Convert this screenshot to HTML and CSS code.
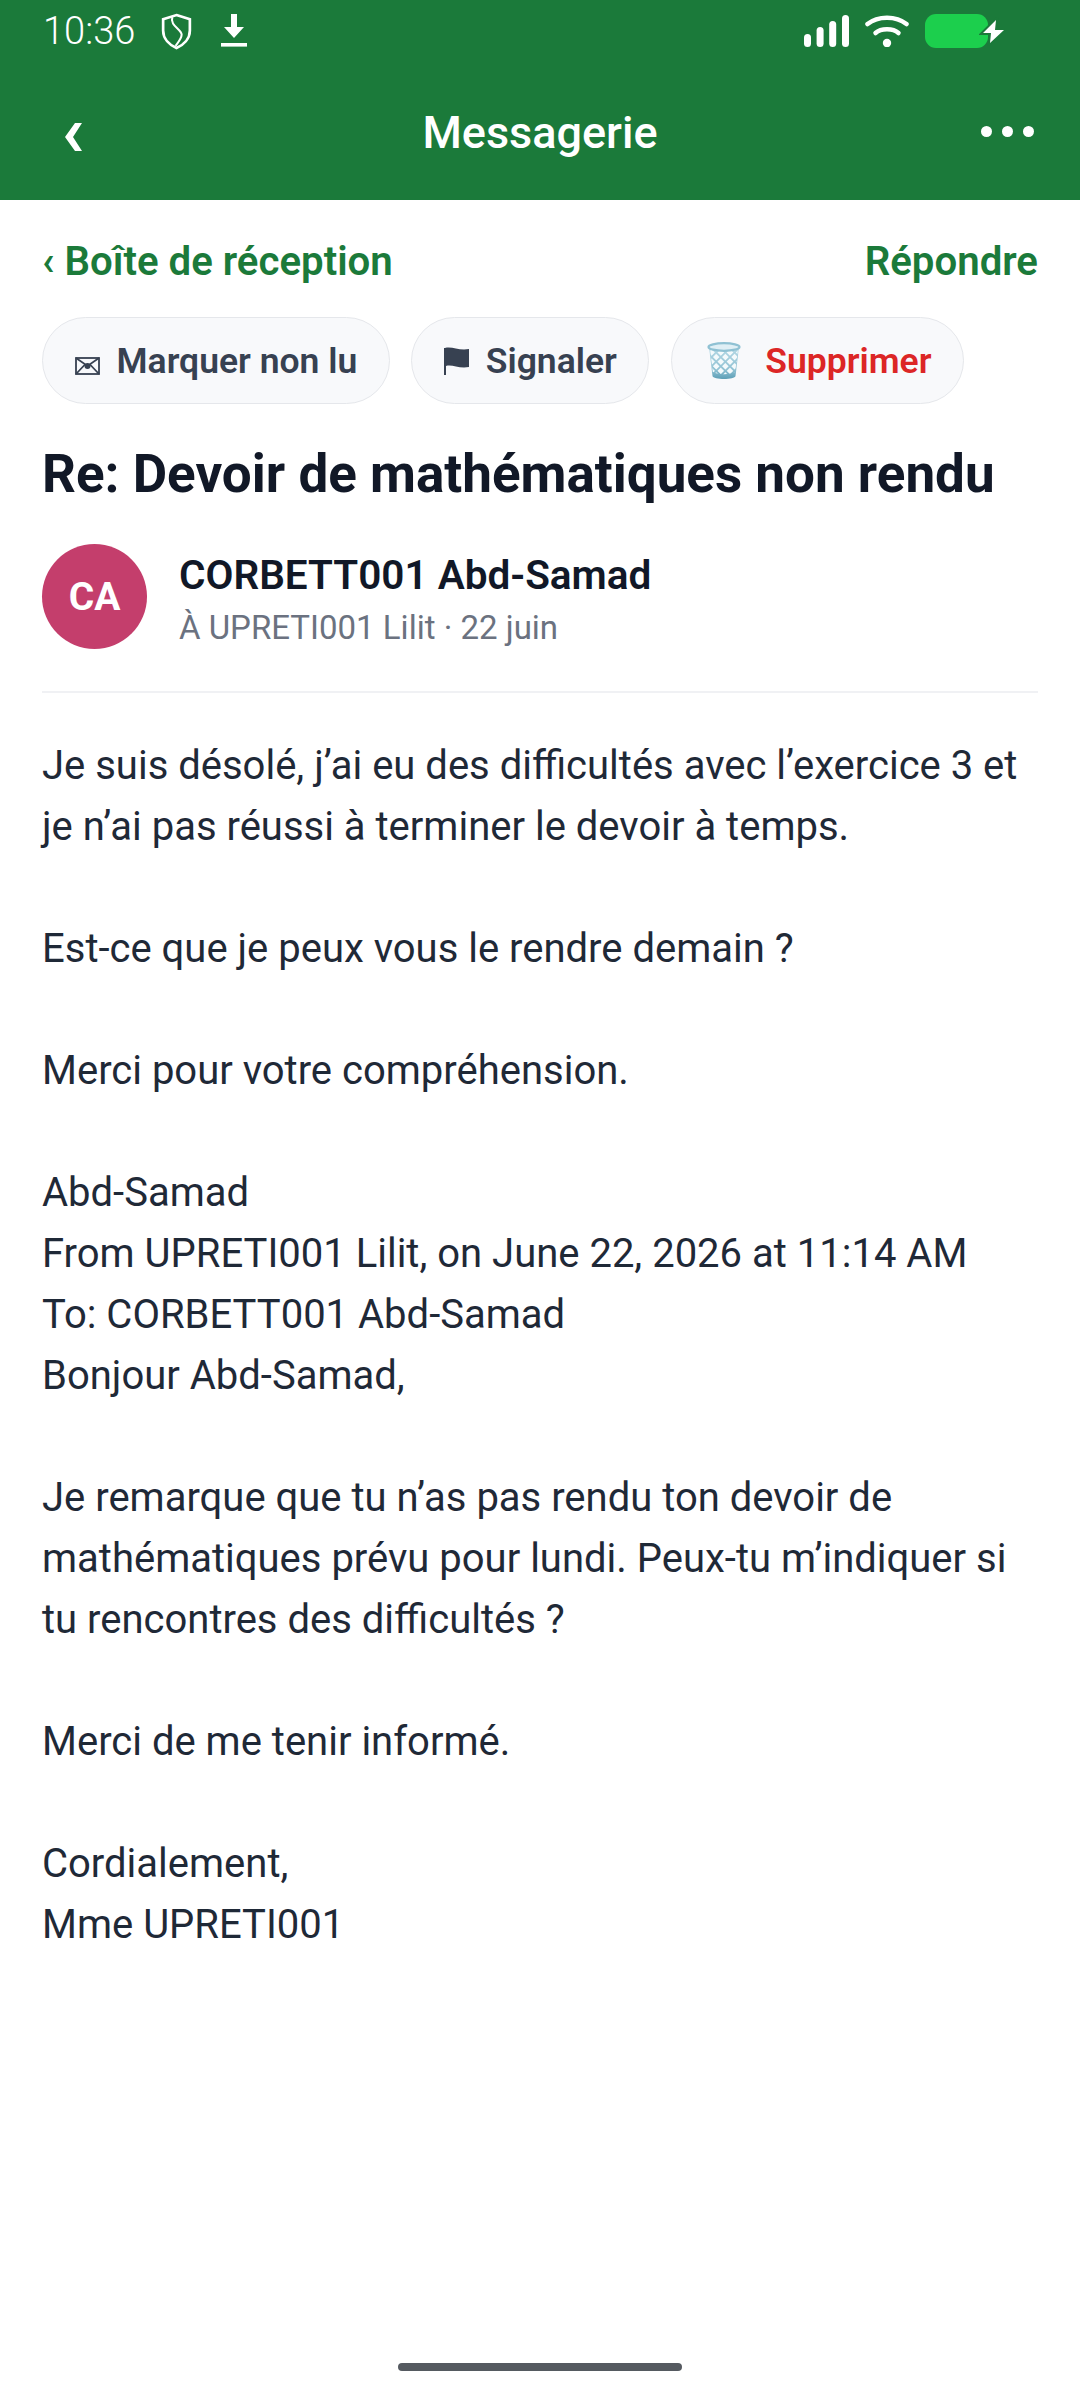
FILE: index.html
```html
<!DOCTYPE html>
<html lang="fr">
<head>
    <meta charset="UTF-8">
    <meta name="viewport" content="width=device-width, initial-scale=1.0">
    <title>Messagerie</title>
    <link rel="stylesheet" href="styles.css">
</head>
<body>
    <header class="top">
        <div class="status-bar">
            <span class="clock">10:36</span>
            <svg class="shield" width="31" height="37" viewBox="0 0 30 36" fill="none" stroke="#fff" stroke-width="2.6">
                <path d="M15 2 L28 6 V17 C28 25 22 31 15 34 C8 31 2 25 2 17 V6 Z"/>
                <path d="M11 4 C8 12 20 16 20 21 C20 25 17 28 14 32" stroke-width="2"/>
            </svg>
            <svg class="download" width="26" height="36" viewBox="0 0 26 36" fill="#fff">
                <path d="M10 1 H16 V14 H23 L13 25 L3 14 H10 Z"/>
                <rect x="0" y="30" width="26" height="3.6"/>
            </svg>
            <div class="status-right">
                <svg width="45" height="32" viewBox="0 0 45 32" fill="#fff">
                    <rect x="0" y="19" width="7" height="13" rx="3.5"/>
                    <rect x="12.600" y="12" width="7" height="20" rx="3.500"/>
                    <rect x="25.200" y="6" width="7" height="26" rx="3.500"/>
                    <rect x="38" y="0" width="7" height="32" rx="3.500"/>
                </svg>
                <svg width="44" height="32" viewBox="0 0 44 32" fill="none" stroke="#fff" stroke-linecap="round">
                    <path d="M2.500 9 C13 0.500 31 0.500 41.500 9" stroke-width="4.500"/>
                    <path d="M10.500 18 C16 13 28 13 33.500 18" stroke-width="4.500"/>
                    <circle cx="22" cy="28" r="4.200" fill="#fff" stroke="none"/>
                </svg>
                <div class="battery">
                    <svg class="bolt" width="28" height="29" viewBox="0 0 28 29" fill="#fff" stroke="#1b7a3a" stroke-width="4" paint-order="stroke">
                        <path d="M17 3 L4 16 H12 L11 26 L25 13 H16 Z"/>
                    </svg>
                </div>
            </div>
        </div>
        <div class="app-bar">
            <svg class="back" width="18" height="28" viewBox="0 0 18 28" fill="#fff">
                <path d="M10 0 H17 L8 14 L17 28 H10 L0 14 Z"/>
            </svg>
            <h1>Messagerie</h1>
            <div class="dots"><i></i><i></i><i></i></div>
        </div>
    </header>

    <main class="content">
        <div class="nav-row">
            <a class="link"><span class="chev">‹</span> Boîte de réception</a>
            <a class="link">Répondre</a>
        </div>

        <div class="actions">
            <button class="pill">
                <svg class="pill-icon envelope" width="25" height="18" viewBox="0 0 25 18" fill="none" stroke="#374151" stroke-width="1.800">
                    <rect x="1" y="1" width="23" height="16"/>
                    <path d="M1 1 L12.500 9 L24 1 M1 17 L10 7.500 M24 17 L15 7.500"/>
                    <circle cx="12.500" cy="9" r="3" fill="#374151" stroke="none"/>
                </svg>
                Marquer non lu
            </button>
            <button class="pill">
                <svg class="pill-icon" width="25" height="28" viewBox="0 0 25 28" fill="#374151">
                    <path d="M0 1 H1 C8 -1 15 4 25 2 V20 C15 22 8 17 2 19 V28 H0 Z"/>
                </svg>
                Signaler
            </button>
            <button class="pill pill-danger">
                <svg class="trash" width="34" height="38" viewBox="0 0 34 38">
                    <defs>
                        <linearGradient id="can" x1="0" y1="0" x2="0" y2="1">
                            <stop offset="0" stop-color="#b5d9e5"/>
                            <stop offset="0.7" stop-color="#8fc1d3"/>
                            <stop offset="1" stop-color="#5d9fb6"/>
                        </linearGradient>
                        <pattern id="mesh" width="6.500" height="6.500" patternUnits="userSpaceOnUse" patternTransform="rotate(45)">
                            <rect x="1.800" y="1.800" width="4.700" height="4.700" fill="#f4fafc"/>
                        </pattern>
                    </defs>
                    <path d="M2 5 L5.500 34 C6 38 28 38 28.500 34 L32 5 Z" fill="url(#can)"/>
                    <path d="M3 7 L5.800 30 C12 33 22 33 28.200 30 L31 7 Z" fill="url(#mesh)"/>
                    <ellipse cx="17" cy="5" rx="15.500" ry="3.800" fill="#dfeff5" stroke="#8fc1d3" stroke-width="2.200"/>
                </svg>
                Supprimer
            </button>
        </div>

        <h2 class="subject">Re: Devoir de mathématiques non rendu</h2>

        <div class="sender">
            <div class="avatar">CA</div>
            <div class="sender-info">
                <div class="sender-name">CORBETT001 Abd-Samad</div>
                <div class="sender-meta">À UPRETI001 Lilit · 22 juin</div>
            </div>
        </div>

        <div class="message">Je suis désolé, j’ai eu des difficultés avec l’exercice 3 et je n’ai pas réussi à terminer le devoir à temps.

Est-ce que je peux vous le rendre demain ?

Merci pour votre compréhension.

Abd-Samad
From UPRETI001 Lilit, on June 22, 2026 at 11:14 AM
To: CORBETT001 Abd-Samad
Bonjour Abd-Samad,

Je remarque que tu n’as pas rendu ton devoir de mathématiques prévu pour lundi. Peux-tu m’indiquer si tu rencontres des difficultés ?

Merci de me tenir informé.

Cordialement,
Mme UPRETI001</div>
    </main>

    <div class="home-bar"></div>
</body>
</html>
```

FILE: styles.css
```css
* {
    box-sizing: border-box;
}
body {
    margin: 0;
    width: 1080px;
    height: 2400px;
    position: relative;
    overflow: hidden;
    background: #ffffff;
    color: #1f2937;
    font-family: Roboto, "Noto Sans", sans-serif;
}
.top {
    height: 200px;
    background-color: #1b7a3a;
    color: #ffffff;
}
.status-bar {
    height: 62px;
    padding: 0 75px 0 43px;
    display: flex;
    align-items: center;
}
.clock {
    font-size: 38px;
    font-weight: 300;
}
.shield {
    margin-left: 26px;
}
.download {
    margin-left: 29px;
}
.status-right {
    margin-left: auto;
    display: flex;
    align-items: center;
    gap: 16px;
}
.battery {
    width: 63px;
    height: 34px;
    margin-right: 17px;
    border-radius: 11px;
    background-color: #1ccf4d;
    position: relative;
}
.bolt {
    position: absolute;
    right: -19px;
    top: 3px;
}
.app-bar {
    height: 138px;
    padding: 0 46px 0 65px;
    display: flex;
    align-items: center;
    justify-content: space-between;
    position: relative;
}
.back {
    margin-top: 12px;
}
.app-bar h1 {
    position: absolute;
    left: 0;
    right: 0;
    margin: 0;
    padding-top: 3px;
    text-align: center;
    font-size: 45px;
    font-weight: 500;
}
.dots {
    display: flex;
    gap: 10px;
}
.dots i {
    width: 11px;
    height: 11px;
    border-radius: 50%;
    background-color: #ffffff;
}
.content {
    padding: 0 42px;
}
.nav-row {
    display: flex;
    justify-content: space-between;
    align-items: center;
    margin-top: 38px;
    line-height: 48px;
}
.link {
    color: #1b7a3a;
    font-size: 40.2px;
    font-weight: 600;
}
.actions {
    display: flex;
    gap: 21.5px;
    margin-top: 31px;
}
.pill {
    height: 87px;
    padding: 0 31.5px;
    display: flex;
    align-items: center;
    gap: 17px;
    border: 1.5px solid #e5e7eb;
    border-radius: 44px;
    background-color: #f8f9fb;
    color: #374151;
    font-family: inherit;
    font-size: 35.5px;
    font-weight: 600;
}
.envelope {
    margin-top: 10px;
}
.pill-danger {
    color: #dc2626;
    gap: 24px;
}
.trash {
    margin-left: 4px;
}
.subject {
    margin: 40px 0 0;
    color: #111827;
    font-size: 53px;
    font-weight: 700;
    line-height: 60px;
}
.sender {
    display: flex;
    align-items: center;
    gap: 32px;
    margin-top: 40px;
    padding-bottom: 42px;
    border-bottom: 2px solid #f0f1f4;
}
.avatar {
    width: 105px;
    height: 105px;
    border-radius: 50%;
    background-color: #c43e6c;
    color: #ffffff;
    display: flex;
    align-items: center;
    justify-content: center;
    font-size: 39px;
    font-weight: 700;
}
.sender-info {
    padding-top: 6px;
}
.sender-name {
    color: #111827;
    font-size: 40.5px;
    font-weight: 600;
    line-height: 48px;
}
.sender-meta {
    margin-top: 9px;
    color: #6b7280;
    font-size: 33px;
    line-height: 40px;
}
.message {
    margin-top: 42px;
    font-size: 40px;
    line-height: 61px;
    white-space: pre-wrap;
}
.home-bar {
    position: absolute;
    left: 398px;
    bottom: 29px;
    width: 284px;
    height: 8px;
    border-radius: 4px;
    background-color: #555a60;
}
```
